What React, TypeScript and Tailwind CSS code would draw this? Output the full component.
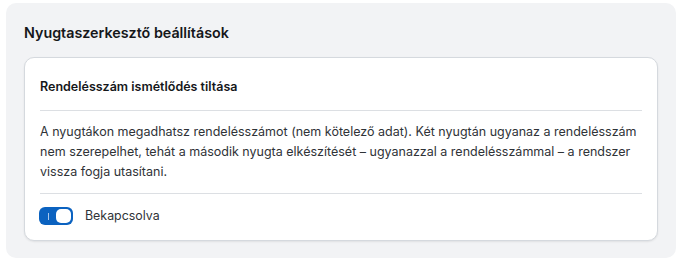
import { useState } from "react";

type ToggleProps = {
  checked: boolean;
  onChange: (v: boolean) => void;
  label: string;
};

function Toggle({ checked, onChange, label }: ToggleProps) {
  return (
    <label className="flex h-5 cursor-pointer items-center gap-3">
      <button
        type="button"
        role="switch"
        aria-checked={checked}
        onClick={() => onChange(!checked)}
        className={`-ml-px flex h-[18px] w-[34px] items-center rounded-[6px] p-[2px] ${
          checked ? "justify-end bg-[#0b62c0]" : "justify-start bg-gray-300"
        }`}
      >
        <span className="flex h-full flex-1 items-center justify-center">
          {checked && <span className="h-[7px] w-px bg-[#a9c8ec]" />}
        </span>
        <span className="h-[14px] w-[15px] rounded-[5px] bg-white" />
      </button>
      <span className="text-[12.4px] text-[#2f3337]">{label}</span>
    </label>
  );
}

export default function App() {
  const [enabled, setEnabled] = useState(true);

  return (
    <div className="pl-[6px] pt-[3px] font-['Inter',sans-serif]">
      <section className="w-[670px] rounded-[10px] bg-[#f2f3f5] px-[18px] pb-[17px] pt-[19px]">
        <h2 className="mb-[13px] text-[14.3px] leading-[22px] font-semibold text-[#15171a]">
          Nyugtaszerkesztő beállítások
        </h2>

        <div className="rounded-[10px] border border-[#d5d9de] bg-white px-[15px] shadow-[0_1px_2px_rgba(0,0,0,0.08)]">
          <h3 className="pb-[13px] pt-[19px] text-[12.5px] leading-5 font-semibold text-[#15171a]">
            Rendelésszám ismétlődés tiltása
          </h3>

          <div className="border-t border-[#dcdfe3]" />

          <p className="pb-[11px] pt-[11px] text-[12.5px] leading-5 text-[#2f3337]">
            A nyugtákon megadhatsz rendelésszámot (nem kötelező adat). Két nyugtán ugyanaz a
            rendelésszám nem szerepelhet, tehát a második nyugta elkészítését – ugyanazzal a
            rendelésszámmal – a rendszer vissza fogja utasítani.
          </p>

          <div className="border-t border-[#dcdfe3]" />

          <div className="pb-[14px] pt-[12px]">
            <Toggle checked={enabled} onChange={setEnabled} label="Bekapcsolva" />
          </div>
        </div>
      </section>
    </div>
  );
}
